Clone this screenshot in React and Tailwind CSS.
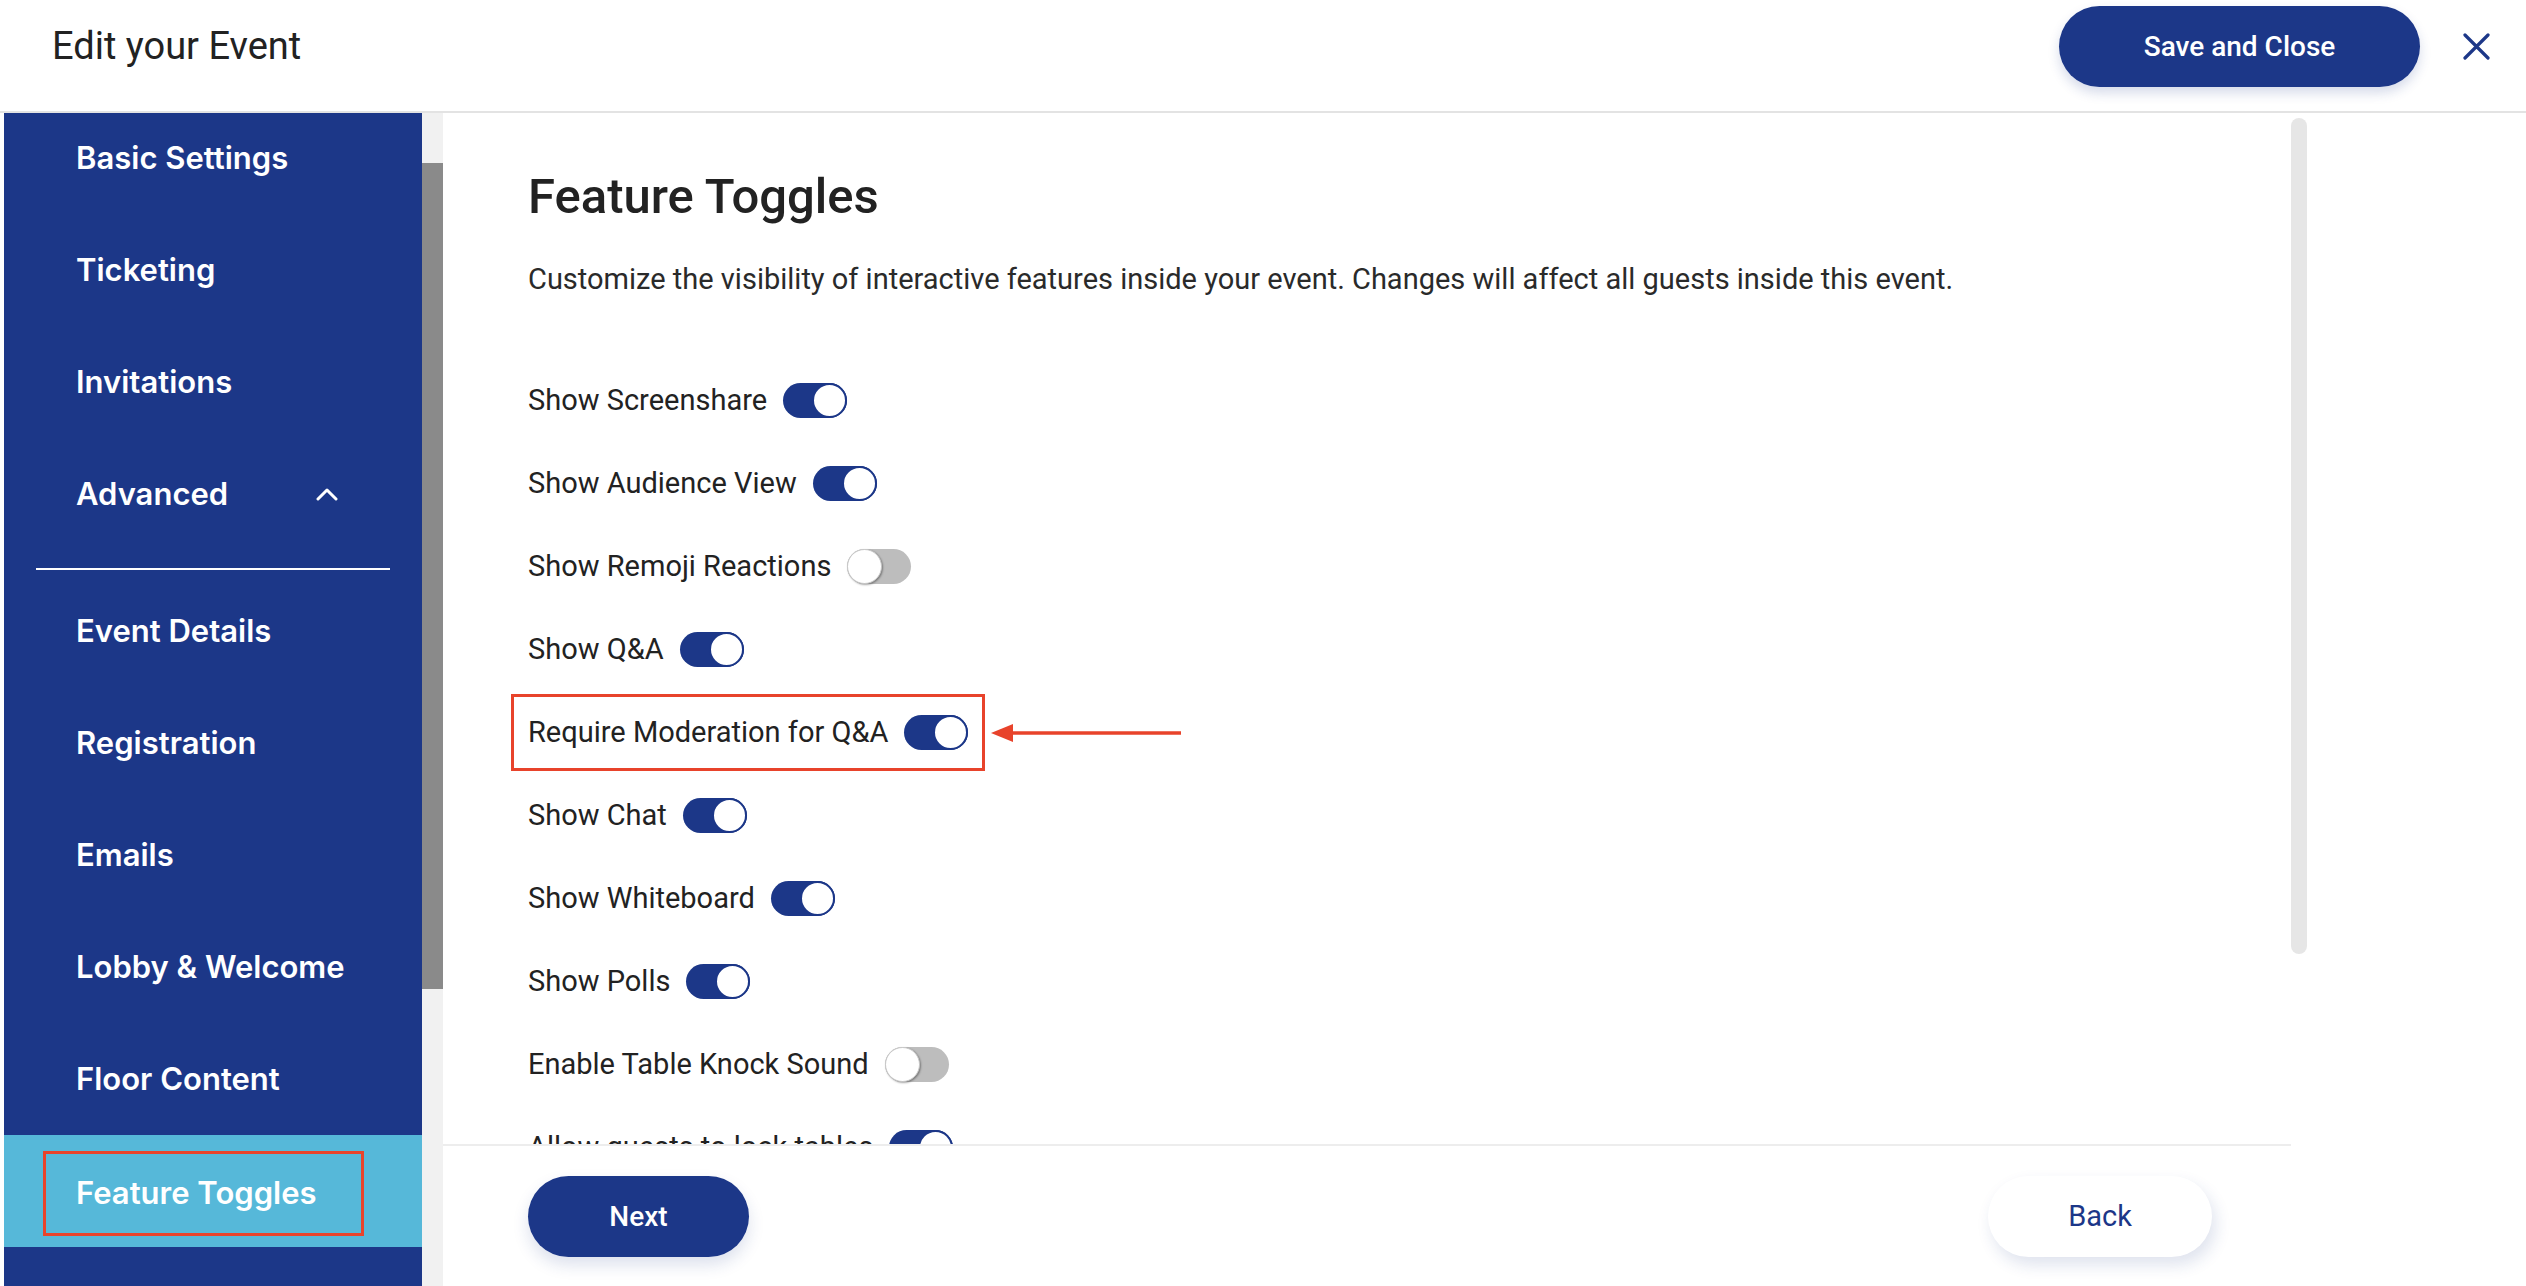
import React from 'react';

const sideTop = ['Basic Settings', 'Ticketing', 'Invitations'];
const sideAdvanced = ['Event Details', 'Registration', 'Emails', 'Lobby & Welcome', 'Floor Content'];

const toggles = [
  { label: 'Show Screenshare', on: true },
  { label: 'Show Audience View', on: true },
  { label: 'Show Remoji Reactions', on: false },
  { label: 'Show Q&A', on: true },
  { label: 'Require Moderation for Q&A', on: true, marked: true },
  { label: 'Show Chat', on: true },
  { label: 'Show Whiteboard', on: true },
  { label: 'Show Polls', on: true },
  { label: 'Enable Table Knock Sound', on: false },
  { label: 'Allow guests to lock tables', on: true },
];

function Toggle({ on }) {
  if (on) {
    return (
      <div className="flex h-[35px] w-[64px] shrink-0 justify-end rounded-full bg-[#1c3788]">
        <div className="h-[35px] w-[35px] rounded-full border-2 border-[#1c3788] bg-white" />
      </div>
    );
  }
  return (
    <div className="flex h-[35px] w-[64px] shrink-0 justify-start rounded-full bg-[#bdbdbd]">
      <div className="h-[35px] w-[35px] rounded-full border border-[#c8c8c8] bg-white shadow-[1px_1px_2px_rgba(0,0,0,0.35)]" />
    </div>
  );
}

function SideItem({ label }) {
  return (
    <div className="flex h-[112px] items-center pl-[72px] text-[31px] font-semibold text-white">
      {label}
    </div>
  );
}

export default function App() {
  return (
    <div className="flex h-[1286px] w-[2526px] flex-col overflow-hidden bg-white font-['Roboto',sans-serif]">
      {/* top bar */}
      <div className="flex h-[113px] shrink-0 items-center border-b-2 border-[#e3e3e3] pb-[18px] pl-[52px] pr-[36px]">
        <h1 className="flex-1 text-[38px] text-[#222]">Edit your Event</h1>
        <button className="h-[81px] w-[361px] rounded-full bg-[#1c3788] text-[28px] font-medium text-white shadow-[0_6px_12px_rgba(28,55,136,0.18)]">
          Save and Close
        </button>
        <svg className="ml-[43px]" width="27" height="27" viewBox="0 0 27 27">
          <path d="M2 2 L25 25 M25 2 L2 25" stroke="#1c3788" strokeWidth="3.2" strokeLinecap="round" />
        </svg>
      </div>

      <div className="flex min-h-0 flex-1">
        {/* sidebar */}
        <div className="ml-[4px] w-[418px] shrink-0 overflow-hidden bg-[#1c3788] font-['Inter',sans-serif]">
          <div className="-mt-[11px]">
            {sideTop.map((s) => (
              <SideItem key={s} label={s} />
            ))}
            <div className="flex h-[112px] items-center pl-[72px] text-[31px] font-semibold text-white">
              <span className="w-[240px]">Advanced</span>
              <svg width="22" height="13" viewBox="0 0 22 13">
                <path d="M2 11 L11 2 L20 11" fill="none" stroke="white" strokeWidth="3" strokeLinecap="round" strokeLinejoin="round" />
              </svg>
            </div>
            <div className="mx-[32px] mb-[5px] mt-[18px] h-[2px] bg-white" />
            {sideAdvanced.map((s) => (
              <SideItem key={s} label={s} />
            ))}
            <div className="h-[112px] bg-[#56b8d9] pb-[11px] pl-[39px] pt-[16px]">
              <div className="flex h-[85px] w-[321px] items-center border-[3px] border-[#e8432b] pl-[30px] text-[31px] font-semibold text-white">
                Feature Toggles
              </div>
            </div>
          </div>
        </div>

        {/* sidebar scrollbar */}
        <div className="w-[21px] shrink-0 bg-[#f1f1f1] pt-[50px]">
          <div className="h-[826px] bg-[#8a8a8a]" />
        </div>

        {/* main */}
        <div className="flex w-[1848px] shrink-0 flex-col">
          <div className="h-[1031px] shrink-0 overflow-hidden pl-[85px] pt-[56px]">
            <h2 className="text-[49px] font-medium leading-[56px] text-[#222]">Feature Toggles</h2>
            <p className="mt-[36px] text-[29px] leading-[36px] text-[#2a2a2a]">
              Customize the visibility of interactive features inside your event. Changes will affect all guests inside this event.
            </p>
            <div className="mt-[62px]">
              {toggles.map((t) => (
                <div key={t.label} className="flex h-[83px] items-center">
                  <div
                    className={
                      t.marked
                        ? 'flex items-center outline-[3px] outline-offset-[14px] outline-[#e8432b] outline-solid'
                        : 'flex items-center'
                    }
                  >
                    <span className="text-[29px] text-[#222]">{t.label}</span>
                    <div className="ml-[16px]">
                      <Toggle on={t.on} />
                    </div>
                  </div>
                  {t.marked && (
                    <svg className="ml-[23px]" width="192" height="22" viewBox="0 0 192 22">
                      <path d="M0 11 L22 2 L22 20 Z" fill="#e8432b" />
                      <path d="M18 11 L190 11" stroke="#e8432b" strokeWidth="3.5" />
                    </svg>
                  )}
                </div>
              ))}
            </div>
          </div>
          <div className="flex flex-1 items-start justify-between border-t-2 border-[#ededed] pl-[85px] pr-[79px] pt-[30px]">
            <button className="h-[81px] w-[221px] rounded-full bg-[#1c3788] text-[28px] font-medium text-white shadow-[0_8px_16px_rgba(28,55,136,0.15)]">
              Next
            </button>
            <button className="h-[81px] w-[224px] rounded-full bg-white text-[29px] text-[#1c3788] shadow-[4px_8px_16px_rgba(28,55,136,0.14)]">
              Back
            </button>
          </div>
        </div>

        {/* content scrollbar */}
        <div className="w-[16px] shrink-0 pt-[5px]">
          <div className="h-[836px] rounded-full bg-[#e6e6e6]" />
        </div>
      </div>
    </div>
  );
}
